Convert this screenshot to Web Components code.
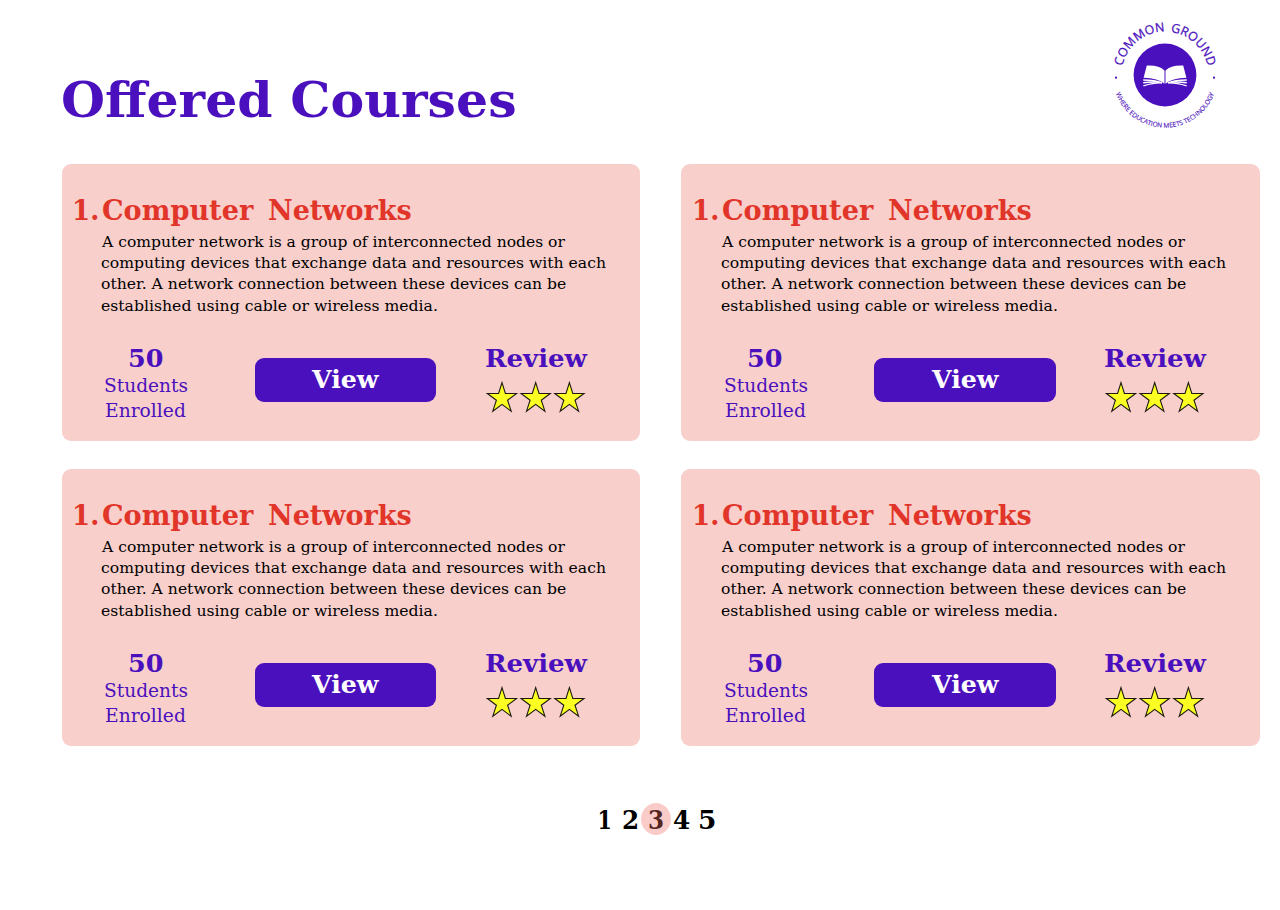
<!DOCTYPE html>
<html lang="en">
<head>
<meta charset="utf-8">
<title>Offered Courses</title>
<style>
html, body { margin: 0; background: #fff; }
body { font-family: "DejaVu Serif", serif; color: #000; }
</style>
</head>
<body>
<courses-page></courses-page>
<script>
const define = (name, html, init) => {
  const tpl = document.createElement('template');
  tpl.innerHTML = html;
  customElements.define(name, class extends HTMLElement {
    connectedCallback() {
      if (this.shadowRoot) return;
      this.attachShadow({ mode: 'open' }).append(tpl.content.cloneNode(true));
      if (init) init.call(this);
    }
  });
};

/* One line of display text whose inked width equals the "width" attribute. */
const pen = document.createElement('canvas').getContext('2d');
define('fit-line', `
<style>
:host { display: block; flex: none; }
span { display: block; width: max-content; white-space: nowrap; transform-origin: 0 0; }
</style><span><slot></slot></span>`, function () {
  const target = +this.getAttribute('width');
  const cs = getComputedStyle(this);
  pen.font = `${cs.fontWeight} ${cs.fontSize} ${cs.fontFamily}`;
  const m = pen.measureText(this.textContent);
  const s = target / (m.actualBoundingBoxLeft + m.actualBoundingBoxRight);
  this.style.width = target + 'px';
  this.shadowRoot.querySelector('span').style.transform =
    `translateX(${m.actualBoundingBoxLeft * s}px) scaleX(${s})`;
});

define('brand-logo', `
<style>:host { display: block; width: 120px; height: 120px; } svg { display: block; overflow: visible; }</style>
<svg width="120" height="120" viewBox="-60 -60 120 120" fill="#4b10bd" font-family="Open Sans, sans-serif">
  <defs>
    <path id="top" d="M-42.6 -8.8 A43.5 43.5 0 0 1 42.6 -8.8 L46 10"/>
    <path id="low" d="M-49.2 18.6 A52.6 52.6 0 0 0 49.2 18.6 L53 6"/>
  </defs>
  <circle r="31.4"/>
  <g fill="#fff">
    <path d="M-18.2 -9.4 Q-6 -10 -.5 -4.4 V8.8 Q-7 3.4 -21.4 2.8 Z"/>
    <path d="M18.2 -9.4 Q6 -10 .5 -4.4 V8.8 Q7 3.4 21.4 2.8 Z"/>
  </g>
  <g fill="none" stroke="#fff" stroke-width="1.4">
    <path d="M-21.8 5 Q-10 5 -3 8M-21.8 7.8 Q-10 6 -3 8M-21.6 10.8 Q-10 7.4 -3 8M21.8 5 Q10 5 3 8M21.8 7.8 Q10 6 3 8M21.6 10.8 Q10 7.4 3 8"/>
  </g>
  <circle cx="-49" cy="2.7" r="1.1"/><circle cx="49" cy="2.7" r="1.1"/>
  <text font-size="12.4" word-spacing="2.5" textLength="119" stroke="#4b10bd" stroke-width=".25"><textPath href="#top">COMMON GROUND</textPath></text>
  <text font-size="6.5" textLength="127" stroke="#4b10bd" stroke-width=".12"><textPath href="#low">WHERE EDUCATION MEETS TECHNOLOGY</textPath></text>
</svg>`);

define('star-rating', `
<style>:host { display: block; } svg { display: block; }</style>
<svg width="100" height="32" viewBox="0 0 100 32" fill="#fbff22" stroke="#1c1a10" stroke-width="1.1">
  <defs><path id="s" d="M16 1.6 L19.4 12.5 L30.6 12.5 L21.6 19.2 L25.2 30.2 L16 23.4 L6.8 30.2 L10.4 19.2 L1.4 12.5 L12.6 12.5 Z"/></defs>
  <use href="#s"/><use href="#s" x="33.7"/><use href="#s" x="67.4"/>
</svg>`);

define('view-button', `
<style>
:host { display: block; }
button { display: flex; align-items: center; justify-content: center; width: 181.5px; height: 44.5px;
  padding: 1px 0 0; box-sizing: border-box; border: 0; border-radius: 9px; background: #4b10bd; color: #fff; font: bold 25px/44px "DejaVu Serif", serif; }
</style><button><fit-line width="69">View</fit-line></button>`);

define('course-card', `
<style>
:host { display: block; box-sizing: border-box; height: 277px; padding: 30.6px 0 0 11.5px; border-radius: 9px; background: #f8cfcb; }
h2 { display: flex; margin: 0; padding-left: 2.3px; font: bold 27px/32px "DejaVu Serif", serif; color: #e2352a; }
h2 fit-line:nth-child(2) { margin-left: 5px; }
h2 fit-line:nth-child(3) { margin-left: 15px; }
.text { padding: 5px 0 0 28.2px; font-size: 15.5px; line-height: 21.33px; }
.foot { display: flex; align-items: flex-start; margin-top: 28px; padding-left: 31.5px; color: #4b10bd; }
.stat { display: flex; flex-direction: column; align-items: center; width: 83px; font-size: 18.5px; line-height: 25px; }
b { display: block; font-size: 25px; line-height: 28px; }
view-button { margin: 12.6px 0 0 67px; }
.review { margin-left: 49.5px; }
star-rating { margin: 8.2px 0 0 0; }
</style>
<h2><fit-line width="23">1.</fit-line><fit-line width="151">Computer</fit-line><fit-line width="142.5">Networks</fit-line></h2>
<div class="text">
<fit-line width="464.5">A computer network is a group of interconnected nodes or</fit-line>
<fit-line width="505">computing devices that exchange data and resources with each</fit-line>
<fit-line width="465">other. A network connection between these devices can be</fit-line>
<fit-line width="336">established using cable or wireless media.</fit-line>
</div>
<div class="foot">
<div class="stat"><b><fit-line width="33">50</fit-line></b><fit-line width="82.5">Students</fit-line><fit-line width="80">Enrolled</fit-line></div>
<view-button></view-button>
<div class="review"><b><fit-line width="102.5">Review</fit-line></b><star-rating></star-rating></div>
</div>`);

define('page-picker', `
<style>
:host { display: flex; justify-content: center; align-items: center; height: 32px; font: bold 25.5px/34px "DejaVu Serif", serif; }
.on { position: relative; }
.on::after { content: ""; position: absolute; left: -7.5px; top: 0; width: 30px; height: 32px; border-radius: 50%; background: rgba(238, 110, 100, .35); }
</style>
<fit-line width="10.5" style="margin-right:13px">1</fit-line>
<fit-line width="14.5" style="margin-right:11px">2</fit-line>
<fit-line class="on" width="14.5" style="margin-right:11px">3</fit-line>
<fit-line width="15.5" style="margin-right:10px">4</fit-line>
<fit-line width="14.5">5</fit-line>`);

define('courses-page', `
<style>
:host { display: block; box-sizing: border-box; width: 1280px; height: 910px; padding: 15px 20px 0 61.7px; overflow: hidden; }
header { display: flex; justify-content: space-between; height: 149px; padding-right: 35.5px; }
h1 { margin: 51px 0 0 1px; font: bold 49px/68px "DejaVu Serif", serif; color: #4b10bd; }
main { display: grid; grid-template-columns: 578.3px 578.6px; justify-content: space-between; row-gap: 28px; }
page-picker { margin: 57.5px 8px 0 0; }
</style>
<header><h1><fit-line width="452">Offered Courses</fit-line></h1><brand-logo></brand-logo></header>
<main><course-card></course-card><course-card></course-card><course-card></course-card><course-card></course-card></main>
<page-picker></page-picker>`);
</script>
</body>
</html>
